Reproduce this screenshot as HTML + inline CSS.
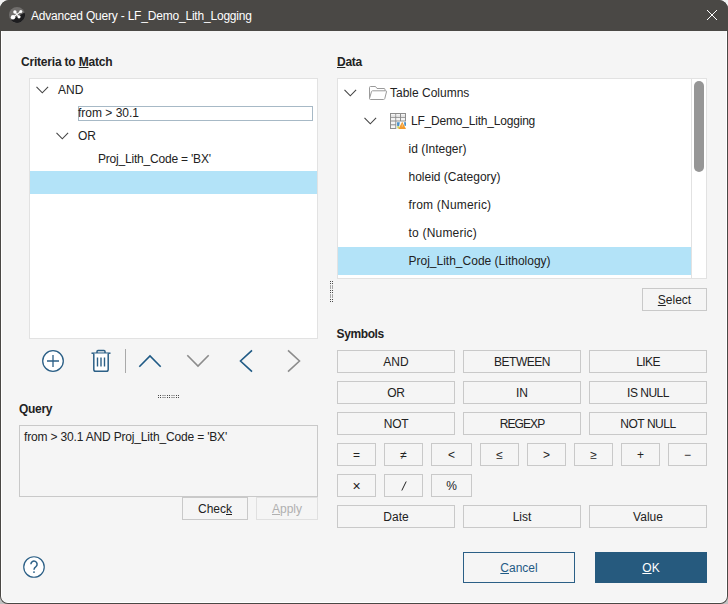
<!DOCTYPE html>
<html><head><meta charset="utf-8">
<style>
*{margin:0;padding:0;box-sizing:border-box}
html,body{width:728px;height:604px;overflow:hidden;background:linear-gradient(#f2f2f2 0,#f2f2f2 50%,#c2c2c2 50%,#c2c2c2 100%)}
body{position:relative;font-family:"Liberation Sans",sans-serif;font-size:12px;color:#222}
.a{position:absolute}
.t{position:absolute;white-space:pre;line-height:14px}
#win{position:absolute;left:0;top:0;width:728px;height:604px;background:#4a4845;border-radius:9px 9px 8px 8px}
#inner{position:absolute;left:1px;top:31px;width:726px;height:572px;background:#f5f5f5;border-left:1px solid #fff;border-right:1px solid #fff;border-bottom:1px solid #fff;border-radius:0 0 7px 7px}
#title{position:absolute;left:0;top:0;width:728px;height:31px;background:#4a4845;border-radius:9px 9px 0 0}
.b{font-weight:bold;letter-spacing:-0.3px}
.box{position:absolute;background:#fff;border:1px solid #e2e2e2}
.btn{position:absolute;border:1px solid #c9c9c9;background:#f5f5f5;text-align:center;line-height:23px;white-space:pre}
.u{text-decoration:underline;text-underline-offset:1px}
</style></head><body>
<div id="win">
<div id="title">
  <svg class="a" style="left:9px;top:7px" width="16" height="16" viewBox="0 0 16 16">
    <circle cx="8" cy="8" r="8" fill="#706e6c"/>
    <path d="M1.8 13 L15.6 5.4 A8 8 0 0 1 1.8 13 Z" fill="#1d1d1f"/>
    <line x1="4" y1="10.2" x2="11.6" y2="4.6" stroke="#fff" stroke-width="1.1"/>
    <line x1="5.9" y1="5" x2="9.9" y2="9.8" stroke="#fff" stroke-width="1.1"/>
    <circle cx="5.9" cy="5" r="1.7" fill="#fff"/>
    <circle cx="11.8" cy="4.5" r="1.5" fill="#fff"/>
    <circle cx="4" cy="10.2" r="2.2" fill="#fff"/>
    <circle cx="10" cy="9.8" r="1.6" fill="#fff"/>
  </svg>
  <div class="t" style="left:31px;top:9px;color:#fff;letter-spacing:-0.2px">Advanced Query - LF_Demo_Lith_Logging</div>
  <svg class="a" style="left:706px;top:9px" width="12" height="12" viewBox="0 0 12 12"><path d="M1 1 L11 11 M11 1 L1 11" stroke="#fff" stroke-width="1"/></svg>
</div>
<div id="inner"></div>
</div>

<!-- Criteria -->
<div class="t b" style="left:21px;top:55px;letter-spacing:-0.2px">Criteria to <span class="u">M</span>atch</div>
<div class="box" style="left:29px;top:78px;width:289px;height:261px"></div>
<svg class="a" style="left:36px;top:86px" width="13" height="8" viewBox="0 0 13 8"><path d="M0.5 0.8 L6.3 6.8 L12.1 0.8" fill="none" stroke="#444" stroke-width="1.1"/></svg>
<div class="t" style="left:58px;top:83px">AND</div>
<div class="a" style="left:78px;top:106px;width:235px;height:15px;border:1px solid #a7b9c6;background:#fff"></div>
<div class="t" style="left:78px;top:106px">from &gt; 30.1</div>
<svg class="a" style="left:56px;top:132px" width="13" height="8" viewBox="0 0 13 8"><path d="M0.5 0.8 L6.3 6.8 L12.1 0.8" fill="none" stroke="#444" stroke-width="1.1"/></svg>
<div class="t" style="left:78px;top:129px">OR</div>
<div class="t" style="left:98px;top:152px;letter-spacing:-0.2px">Proj_Lith_Code = 'BX'</div>
<div class="a" style="left:30px;top:171px;width:287px;height:23px;background:#b3e3f8"></div>

<!-- toolbar -->
<svg class="a" style="left:40px;top:348px" width="26" height="26" viewBox="0 0 26 26">
  <circle cx="13" cy="13" r="10.3" fill="#fff" stroke="#2b5f86" stroke-width="1.3"/>
  <path d="M7 13 H19 M13 7 V19" stroke="#2b5f86" stroke-width="1.3"/>
</svg>
<svg class="a" style="left:90px;top:348px" width="22" height="26" viewBox="0 0 22 26">
  <path d="M1.5 5.2 H20.5" stroke="#2b5f86" stroke-width="1.5"/>
  <path d="M7 5 V3.5 Q7 2.5 8 2.5 H14 Q15 2.5 15 3.5 V5" fill="none" stroke="#2b5f86" stroke-width="1.5"/>
  <path d="M3.8 5.5 V21.5 Q3.8 23.3 5.6 23.3 H16.4 Q18.2 23.3 18.2 21.5 V5.5" fill="#fff" stroke="#2b5f86" stroke-width="1.5"/>
  <path d="M7.5 9.5 V18.5 M11 9.5 V18.5 M14.5 9.5 V18.5" stroke="#2b5f86" stroke-width="1.4"/>
</svg>
<div class="a" style="left:125px;top:349px;width:1px;height:24px;background:#a9a9a9"></div>
<svg class="a" style="left:138px;top:353px" width="24" height="16" viewBox="0 0 24 16"><path d="M1.3 13.8 L12 3 L22.7 13.8" fill="none" stroke="#1f5a85" stroke-width="1.6"/></svg>
<svg class="a" style="left:186px;top:353px" width="24" height="16" viewBox="0 0 24 16"><path d="M1.3 2.2 L12 13 L22.7 2.2" fill="none" stroke="#8c8c8c" stroke-width="1.6"/></svg>
<svg class="a" style="left:238px;top:349px" width="16" height="24" viewBox="0 0 16 24"><path d="M14 1.3 L2.5 12 L14 22.7" fill="none" stroke="#1f5a85" stroke-width="1.6"/></svg>
<svg class="a" style="left:286px;top:349px" width="16" height="24" viewBox="0 0 16 24"><path d="M2 1.3 L13.5 12 L2 22.7" fill="none" stroke="#8c8c8c" stroke-width="1.6"/></svg>

<!-- splitter handle -->
<svg class="a" style="left:158px;top:395px" width="21" height="3" viewBox="0 0 21 3" shape-rendering="crispEdges"><rect x="0" y="0" width="1" height="1" fill="#4a4a4a"/><rect x="0" y="2" width="1" height="1" fill="#4a4a4a"/><rect x="2" y="0" width="1" height="1" fill="#4a4a4a"/><rect x="2" y="2" width="1" height="1" fill="#4a4a4a"/><rect x="9" y="0" width="1" height="1" fill="#4a4a4a"/><rect x="9" y="2" width="1" height="1" fill="#4a4a4a"/><rect x="11" y="0" width="1" height="1" fill="#4a4a4a"/><rect x="11" y="2" width="1" height="1" fill="#4a4a4a"/><rect x="18" y="0" width="1" height="1" fill="#4a4a4a"/><rect x="18" y="2" width="1" height="1" fill="#4a4a4a"/><rect x="20" y="0" width="1" height="1" fill="#4a4a4a"/><rect x="20" y="2" width="1" height="1" fill="#4a4a4a"/><rect x="4" y="0" width="4" height="1" fill="#a8a8a8"/><rect x="4" y="2" width="4" height="1" fill="#a8a8a8"/><rect x="13" y="0" width="4" height="1" fill="#a8a8a8"/><rect x="13" y="2" width="4" height="1" fill="#a8a8a8"/></svg>

<!-- Query -->
<div class="t b" style="left:19px;top:402px">Query</div>
<div class="a" style="left:19px;top:425px;width:299px;height:72px;border:1px solid #c9c9c9;background:#f5f5f5"></div>
<div class="t" style="left:24px;top:430px;letter-spacing:-0.17px">from &gt; 30.1 AND Proj_Lith_Code = 'BX'</div>
<div class="btn" style="left:182px;top:497px;width:66px;height:23px">Chec<span class="u">k</span></div>
<div class="btn" style="left:256px;top:497px;width:62px;height:23px;border-color:#e0e0e0;color:#b0b0b0"><span class="u">A</span>pply</div>

<!-- Data -->
<div class="t b" style="left:337px;top:55px"><span class="u">D</span>ata</div>
<div class="box" style="left:337px;top:78px;width:370px;height:201px"></div>
<div class="a" style="left:691px;top:79px;width:1px;height:199px;background:#e2e2e2"></div>
<div class="a" style="left:694px;top:81px;width:10px;height:91px;border-radius:5px;background:#969696"></div>
<div class="a" style="left:338px;top:247px;width:353px;height:28px;background:#b3e3f8"></div>
<svg class="a" style="left:344px;top:89px" width="13" height="8" viewBox="0 0 13 8"><path d="M0.5 0.8 L6.3 6.8 L12.1 0.8" fill="none" stroke="#444" stroke-width="1.1"/></svg>
<svg class="a" style="left:368px;top:85px" width="20" height="16" viewBox="0 0 20 16">
  <path d="M1.5 13.5 V2.5 Q1.5 1.5 2.5 1.5 H7.5 L9 3.5 H16 Q17 3.5 17 4.5 V6" fill="none" stroke="#9a9a9a" stroke-width="1"/>
  <path d="M1.5 13.5 L3.5 6.5 Q3.8 5.8 4.5 5.8 H17.8 Q18.8 5.8 18.5 6.8 L16.8 13.5 Q16.5 14.5 15.5 14.5 H2.5 Q1.5 14.5 1.5 13.5Z" fill="#fff" stroke="#9a9a9a" stroke-width="1"/>
</svg>
<div class="t" style="left:390px;top:86px">Table Columns</div>
<svg class="a" style="left:364px;top:117px" width="13" height="8" viewBox="0 0 13 8"><path d="M0.5 0.8 L6.3 6.8 L12.1 0.8" fill="none" stroke="#444" stroke-width="1.1"/></svg>
<svg class="a" style="left:390px;top:113px" width="16" height="16" viewBox="0 0 16 16">
  <rect x="0" y="0" width="16" height="16" fill="#8d8d8d"/>
  <g fill="#f5f5f5">
   <rect x="1" y="1" width="4.3" height="2.8"/><rect x="6.2" y="1" width="3.8" height="2.8"/><rect x="11" y="1" width="4" height="2.8"/>
   <rect x="1" y="4.8" width="4.3" height="2.7"/><rect x="6.2" y="4.8" width="3.8" height="2.7"/><rect x="11" y="4.8" width="4" height="2.7"/>
   <rect x="1" y="8.5" width="4.3" height="2.8"/>
   <rect x="1" y="12.3" width="4.3" height="2.7"/>
  </g>
  <g fill="#dcdcdc"><rect x="1" y="2.2" width="4.3" height="0.6"/><rect x="6.2" y="2.2" width="3.8" height="0.6"/><rect x="11" y="2.2" width="4" height="0.6"/></g>
  <path d="M6.3 8.5 H16 V16 H6.3Z" fill="#fff"/>
  <path d="M7 9.2 H9.8 L9.2 13.2 H7.2Z" fill="#4a90c8"/>
  <path d="M7.2 13.2 H9 V15.5 H7.4Z" fill="#c9d65a"/>
  <path d="M13.9 9.2 H16 V12.8 L14.6 13Z" fill="#4a90c8"/>
  <path d="M12.2 8.8 L16 16 H8.4 Z" fill="#f39b2e"/>
  <rect x="11.8" y="11.3" width="0.8" height="2.4" fill="#fbd4a0"/>
</svg>
<div class="t" style="left:411px;top:114px;letter-spacing:-0.2px">LF_Demo_Lith_Logging</div>
<div class="t" style="left:408.5px;top:142px">id (Integer)</div>
<div class="t" style="left:408.5px;top:170px">holeid (Category)</div>
<div class="t" style="left:408.5px;top:198px;letter-spacing:0.2px">from (Numeric)</div>
<div class="t" style="left:408.5px;top:226px;letter-spacing:0.2px">to (Numeric)</div>
<div class="t" style="left:408.5px;top:254px">Proj_Lith_Code (Lithology)</div>

<!-- vertical splitter -->
<svg class="a" style="left:330px;top:281px" width="3" height="21" viewBox="0 0 3 21" shape-rendering="crispEdges"><rect x="0" y="0" width="1" height="1" fill="#4a4a4a"/><rect x="2" y="0" width="1" height="1" fill="#4a4a4a"/><rect x="0" y="2" width="1" height="1" fill="#4a4a4a"/><rect x="2" y="2" width="1" height="1" fill="#4a4a4a"/><rect x="0" y="9" width="1" height="1" fill="#4a4a4a"/><rect x="2" y="9" width="1" height="1" fill="#4a4a4a"/><rect x="0" y="11" width="1" height="1" fill="#4a4a4a"/><rect x="2" y="11" width="1" height="1" fill="#4a4a4a"/><rect x="0" y="18" width="1" height="1" fill="#4a4a4a"/><rect x="2" y="18" width="1" height="1" fill="#4a4a4a"/><rect x="0" y="20" width="1" height="1" fill="#4a4a4a"/><rect x="2" y="20" width="1" height="1" fill="#4a4a4a"/><rect x="0" y="4" width="1" height="4" fill="#a8a8a8"/><rect x="2" y="4" width="1" height="4" fill="#a8a8a8"/><rect x="0" y="13" width="1" height="4" fill="#a8a8a8"/><rect x="2" y="13" width="1" height="4" fill="#a8a8a8"/></svg>

<div class="btn" style="left:642px;top:288px;width:65px;height:23px"><span class="u">S</span>elect</div>

<!-- Symbols -->
<div class="t b" style="left:336.6px;top:327px;letter-spacing:-0.4px">Symbols</div>
<div class="btn" style="left:337px;top:350px;width:118px;height:23px">AND</div>
<div class="btn" style="left:463px;top:350px;width:118px;height:23px;letter-spacing:-0.5px">BETWEEN</div>
<div class="btn" style="left:589px;top:350px;width:118px;height:23px;letter-spacing:-0.6px">LIKE</div>
<div class="btn" style="left:337px;top:381px;width:118px;height:23px;letter-spacing:-0.3px">OR</div>
<div class="btn" style="left:463px;top:381px;width:118px;height:23px">IN</div>
<div class="btn" style="left:589px;top:381px;width:118px;height:23px;letter-spacing:-0.5px">IS NULL</div>
<div class="btn" style="left:337px;top:412px;width:118px;height:23px;letter-spacing:-0.3px">NOT</div>
<div class="btn" style="left:463px;top:412px;width:118px;height:23px;letter-spacing:-0.9px">REGEXP</div>
<div class="btn" style="left:589px;top:412px;width:118px;height:23px;letter-spacing:-0.45px">NOT NULL</div>

<div class="btn" style="left:337px;top:443px;width:39px;height:23px">=</div>
<div class="btn" style="left:384px;top:443px;width:39px;height:23px">≠</div>
<div class="btn" style="left:431px;top:443px;width:41px;height:23px">&lt;</div>
<div class="btn" style="left:480px;top:443px;width:39px;height:23px">≤</div>
<div class="btn" style="left:527px;top:443px;width:39px;height:23px">&gt;</div>
<div class="btn" style="left:574px;top:443px;width:39px;height:23px">≥</div>
<div class="btn" style="left:621px;top:443px;width:39px;height:23px">+</div>
<div class="btn" style="left:668px;top:443px;width:39px;height:23px">−</div>
<div class="btn" style="left:337px;top:474px;width:39px;height:23px;font-size:14px">×</div>
<div class="btn" style="left:384px;top:474px;width:39px;height:23px"><svg class="a" style="left:16px;top:6px" width="6" height="10" viewBox="0 0 6 10"><path d="M0.8 9.5 L5.2 0.5" stroke="#222" stroke-width="1"/></svg></div>
<div class="btn" style="left:431px;top:474px;width:41px;height:23px">%</div>

<div class="btn" style="left:337px;top:505px;width:118px;height:23px">Date</div>
<div class="btn" style="left:463px;top:505px;width:118px;height:23px">List</div>
<div class="btn" style="left:589px;top:505px;width:118px;height:23px">Value</div>

<!-- footer -->
<svg class="a" style="left:22px;top:556px" width="24" height="23" viewBox="0 0 24 23">
  <circle cx="12" cy="11" r="10.25" fill="#fff" stroke="#2b5f86" stroke-width="1.2"/>
  <path d="M8.9 8.3 A3.1 3.1 0 1 1 13.9 10.6 Q12 11.8 12 13.8" fill="none" stroke="#2b5f86" stroke-width="1.5"/><circle cx="12" cy="16.1" r="0.95" fill="#2b5f86"/>
</svg>
<div class="btn" style="left:463px;top:552px;width:112px;height:31px;line-height:31px;border-color:#2b5f86;color:#1f5a85"><span class="u">C</span>ancel</div>
<div class="btn" style="left:595px;top:552px;width:112px;height:31px;line-height:33px;border:none;background:#265a7e;color:#fff"><span class="u">O</span>K</div>
</body></html>
